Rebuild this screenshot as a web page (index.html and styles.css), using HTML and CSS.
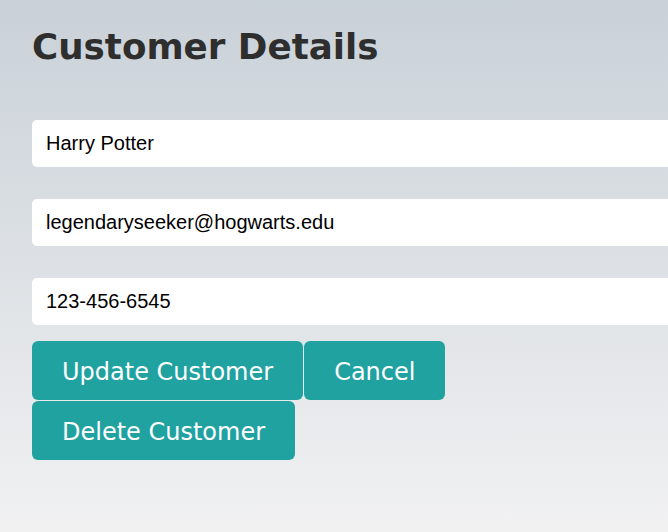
FILE: index.html
```html
<!DOCTYPE html>
<html>
<head>
<meta charset="utf-8">
<link rel="stylesheet" href="styles.css">
</head>
<body>
<main class="page">
  <h1 class="title">Customer Details</h1>
  <form class="form">
    <input class="field" type="text" value="Harry Potter">
    <input class="field" type="text" value="legendaryseeker@hogwarts.edu">
    <input class="field" type="text" value="123-456-6545">
    <div class="actions">
      <button type="button" class="btn">Update Customer</button>
      <button type="button" class="btn">Cancel</button>
      <button type="button" class="btn">Delete Customer</button>
    </div>
  </form>
</main>
</body>
</html>
```

FILE: styles.css
```css
html, body {
  margin: 0;
  padding: 0;
  height: 100%;
}
body {
  background: linear-gradient(to bottom, #c9d1d8 0%, #f1f1f2 100%);
  overflow: hidden;
  font-family: "DejaVu Sans", Verdana, sans-serif;
}
.page {
  padding: 26px 0 0 32px;
  overflow: hidden;
}
.title {
  margin: 0 0 52px;
  font-size: 35.7px;
  font-weight: bold;
  color: #2e2e2e;
  line-height: 42px;
}
.form {
  display: flex;
  flex-direction: column;
  align-items: flex-start;
}
.field {
  box-sizing: border-box;
  width: 680px;
  height: 47px;
  margin: 0 0 32px;
  padding: 0 14px;
  border: none;
  border-radius: 5px;
  background: #ffffff;
  font-family: "Liberation Sans", Arial, sans-serif;
  font-size: 20px;
  color: #000;
  outline: none;
}
.field:nth-of-type(3) {
  margin-bottom: 16px;
}
.actions {
  display: flex;
  flex-wrap: wrap;
  gap: 1px 1px;
  width: 430px;
}
.btn {
  border: none;
  border-radius: 6px;
  background: #20a2a0;
  color: #ffffff;
  font-family: "DejaVu Sans", Verdana, sans-serif;
  font-size: 24px;
  line-height: 28px;
  padding: 17px 30px 14px;
  cursor: pointer;
}
```
